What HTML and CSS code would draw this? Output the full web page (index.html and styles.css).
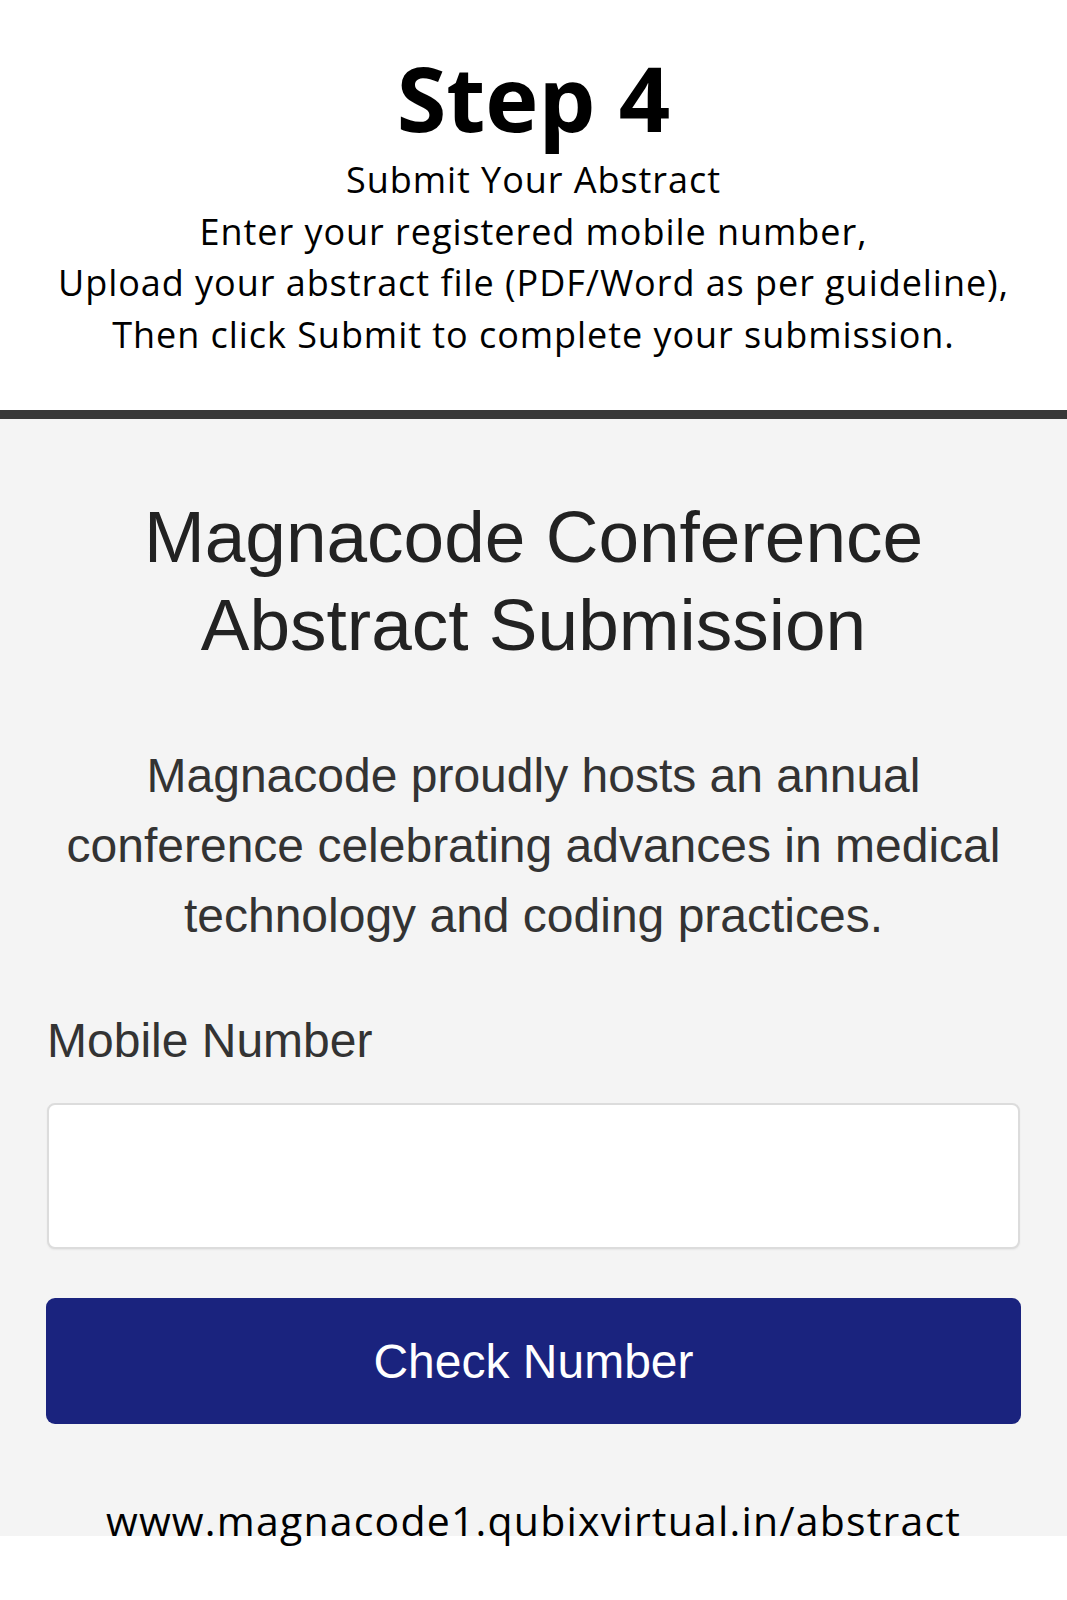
FILE: index.html
```html
<!DOCTYPE html>
<html lang="en">
<head>
<meta charset="utf-8">
<title>Step 4 - Submit Your Abstract</title>
<link rel="stylesheet" href="styles.css">
</head>
<body>
<header class="intro">
  <h1 class="step-title">Step 4</h1>
  <div class="step-text">
    <p>Submit Your Abstract</p>
    <p>Enter your registered mobile number,</p>
    <p>Upload your abstract file (PDF/Word as per guideline),</p>
    <p>Then click Submit to complete your submission.</p>
  </div>
</header>
<div class="divider"></div>
<main class="panel">
  <h2 class="panel-title">Magnacode Conference<br>Abstract Submission</h2>
  <p class="panel-desc">Magnacode proudly hosts an annual<br>conference celebrating advances in medical<br>technology and coding practices.</p>
  <form class="form">
    <label class="form-label" for="mobile">Mobile Number</label>
    <input class="form-input" id="mobile" type="text">
    <button class="form-button" type="button">Check Number</button>
  </form>
  <div class="url">www.magnacode1.qubixvirtual.in/abstract</div>
</main>
</body>
</html>
```

FILE: styles.css
```css
html, body {
  margin: 0;
  padding: 0;
  background: #ffffff;
}

body {
  width: 1067px;
  min-height: 1600px;
  font-family: "Open Sans", "Noto Sans", sans-serif;
  color: #000;
}

.intro {
  padding: 52px 0 50px;
  text-align: center;
}

.step-title {
  margin: 0 0 12px;
  font-family: "Open Sans", sans-serif;
  font-weight: 700;
  font-size: 90px;
  line-height: 90px;
  color: #000;
}

.step-text p {
  margin: 0;
  font-size: 36px;
  line-height: 51.5px;
  letter-spacing: 0.95px;
  color: #000;
}

.divider {
  height: 9px;
  background: #383838;
}

.panel {
  background: linear-gradient(to bottom, #f4f4f4 calc(100% - 12px), #ffffff calc(100% - 12px));
  padding: 74px 47px 0;
  font-family: "Liberation Sans", Arial, sans-serif;
}

.panel-title {
  margin: 0;
  text-align: center;
  font-weight: 400;
  font-size: 73px;
  line-height: 88px;
  color: #222;
}

.panel-desc {
  margin: 72px 0 0;
  text-align: center;
  font-size: 48px;
  line-height: 70px;
  color: #333;
}

.form {
  display: flex;
  flex-direction: column;
  margin-top: 62px;
}

.form-label {
  font-size: 48px;
  line-height: 56px;
  color: #333;
}

.form-input {
  box-sizing: border-box;
  margin: 34px 0 0;
  width: 100%;
  height: 146px;
  background: #fff;
  border: 2px solid #dcdcdc;
  border-radius: 8px;
  box-shadow: 0 1px 2px rgba(0, 0, 0, 0.06);
  font-family: "Liberation Sans", Arial, sans-serif;
  font-size: 40px;
  padding: 0 20px;
}

.form-button {
  box-sizing: border-box;
  margin: 49px -1px 0;
  height: 126px;
  background: #1a237e;
  color: #fff;
  border: none;
  border-radius: 9px;
  font-family: "Liberation Sans", Arial, sans-serif;
  font-size: 48px;
  cursor: pointer;
}

.url {
  margin-top: 68px;
  text-align: center;
  font-family: "Open Sans", "Noto Sans", sans-serif;
  font-size: 41px;
  line-height: 56px;
  letter-spacing: 1.2px;
  color: #000;
}
```
